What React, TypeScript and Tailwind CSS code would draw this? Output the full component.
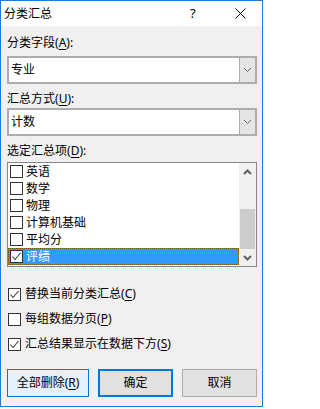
import React from 'react';

const FONT = "font-['Noto_Sans','Noto_Sans_CJK_SC',sans-serif]";

const listItems = [
  { label: '英语', checked: false },
  { label: '数学', checked: false },
  { label: '物理', checked: false },
  { label: '计算机基础', checked: false },
  { label: '平均分', checked: false },
  { label: '评绩', checked: true },
];

function CheckBox({ checked }: { checked: boolean }) {
  return (
    <span className="flex h-[13px] w-[13px] shrink-0 items-center justify-center border border-[#333333] bg-white">
      {checked && (
        <svg width="11" height="11" viewBox="0 0 11 11">
          <polyline points="1.5,5.5 4,8.5 9.5,2" fill="none" stroke="#3c3c3c" strokeWidth="1.1" />
        </svg>
      )}
    </span>
  );
}

function Chevron({ up = false }: { up?: boolean }) {
  return (
    <svg width="9" height="6" viewBox="0 0 9 6">
      <polyline
        points={up ? '1,5 4.5,1.5 8,5' : '1,1 4.5,4.5 8,1'}
        fill="none"
        stroke="#606060"
        strokeWidth={up ? 2 : 1}
      />
    </svg>
  );
}

function Combo({ value }: { value: string }) {
  return (
    <div className="flex h-[28px] w-full border-2 border-[#adadad] bg-white">
      <div className="flex flex-1 items-center pl-[2px]">{value}</div>
      <div className="flex w-[16px] items-center justify-center border-l border-[#adadad] bg-[#e5e5e5]">
        <Chevron />
      </div>
    </div>
  );
}

function Label({ text, k, className }: { text: string; k: string; className: string }) {
  return (
    <div className={`h-4 leading-4 ${className}`}>
      {text}(<span className="underline underline-offset-2">{k}</span>):
    </div>
  );
}

export default function App() {
  return (
    <div className={`h-[409px] w-[264px] bg-white text-[12px] text-black ${FONT}`}>
      <div className="flex h-[407px] w-[263px] flex-col border border-[#1a7fd4]">
        <div className="flex h-[25px] items-center bg-white pl-[3px]">
          <span className="flex-1">分类汇总</span>
          <span className="w-[10px] text-[13px]">?</span>
          <svg width="11" height="11" viewBox="0 0 11 11" className="ml-[35px] mr-[16px]">
            <path d="M0.5 0.5 L10.5 10.5 M10.5 0.5 L0.5 10.5" stroke="#000" strokeWidth="1" />
          </svg>
        </div>
        <div className="flex flex-1 flex-col bg-[#f0f0f0] pl-[6px] pr-[5px]">
          <Label text="分类字段" k="A" className="mt-[9px]" />
          <div className="mt-[5px]">
            <Combo value="专业" />
          </div>
          <Label text="汇总方式" k="U" className="mt-[7px]" />
          <div className="mt-px">
            <Combo value="计数" />
          </div>
          <Label text="选定汇总项" k="D" className="mt-[7px]" />
          <div className="mt-[3px] flex h-[105px] border border-[#828790] bg-white">
            <div className="flex flex-1 flex-col">
              {listItems.map((item) => (
                <div
                  key={item.label}
                  className={`flex h-[17px] items-center gap-[3px] pl-[1px] ${
                    item.checked
                      ? 'border border-dotted border-[#7a5000] bg-[#3399ff] text-white'
                      : 'border border-transparent'
                  }`}
                >
                  <CheckBox checked={item.checked} />
                  <span className="leading-4">{item.label}</span>
                </div>
              ))}
            </div>
            <div className="flex w-[17px] flex-col bg-[#f0f0f0]">
              <div className="flex h-[17px] items-center justify-center">
                <Chevron up />
              </div>
              <div className="flex-1 pt-[29px] pb-[0px]">
                <div className="mx-px h-[40px] bg-[#cdcdcd]" />
              </div>
              <div className="flex h-[17px] items-center justify-center">
                <svg width="9" height="6" viewBox="0 0 9 6">
                  <polyline points="1,1 4.5,4.5 8,1" fill="none" stroke="#606060" strokeWidth="2" />
                </svg>
              </div>
            </div>
          </div>
          <div className="mt-[19px] flex flex-col gap-[9px] pl-px">
            {[
              { text: '替换当前分类汇总', k: 'C', checked: true },
              { text: '每组数据分页', k: 'P', checked: false },
              { text: '汇总结果显示在数据下方', k: 'S', checked: true },
            ].map((o) => (
              <div key={o.k} className="flex h-4 items-center gap-[4px] leading-4">
                <CheckBox checked={o.checked} />
                <span>
                  {o.text}(<span className="underline underline-offset-2">{o.k}</span>)
                </span>
              </div>
            ))}
          </div>
          <div className="mt-[17px] flex gap-[9px]">
            <button className="flex h-[28px] w-[82px] items-center justify-center border border-[#0078d7] bg-[#e5f1fb]">
              全部删除(<span className="underline underline-offset-2">R</span>)
            </button>
            <button className="flex h-[28px] w-[75px] items-center justify-center border-2 border-[#0078d7] bg-[#e1e1e1]">
              确定
            </button>
            <button className="flex h-[28px] w-[75px] items-center justify-center border border-[#adadad] bg-[#e1e1e1]">
              取消
            </button>
          </div>
        </div>
      </div>
    </div>
  );
}
